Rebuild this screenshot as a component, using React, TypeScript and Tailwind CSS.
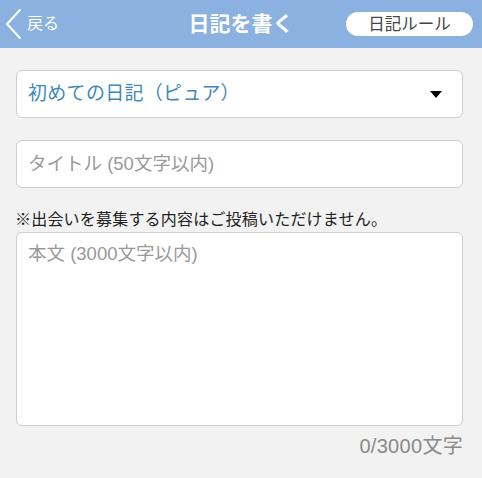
const font = { fontFamily: '"Liberation Sans", "Noto Sans CJK JP", sans-serif' };

export default function App() {
  return (
    <div className="w-[482px] h-[478px] bg-[#f2f2f2] overflow-hidden" style={font}>
      <header className="h-[48px] bg-[#8ab1e0] flex items-center relative">
        <button className="flex items-center text-white pl-[4px]">
          <svg width="20" height="32" viewBox="0 0 20 32" fill="none">
            <polyline points="16,2 3,16 16,30" stroke="white" strokeWidth="2" strokeLinecap="round" strokeLinejoin="round" />
          </svg>
          <span className="text-[16px] ml-[3px]">戻る</span>
        </button>
        <h1 className="absolute left-1/2 -translate-x-1/2 text-white text-[21px] font-bold">
          日記を書く
        </h1>
        <button className="ml-auto mr-[9px] w-[127px] h-[24px] rounded-full bg-white text-[#444] text-[16.5px] leading-none flex items-center justify-center">
          日記ルール
        </button>
      </header>

      <div className="pl-[16px] pt-[22px] pr-[19px]">
        <div className="h-[48px] bg-white border border-[#cfcfcf] rounded-[6px] flex items-center pl-[11px] pr-[20px]">
          <span className="text-[19px] text-[#3f89b8] tracking-[0.3px]">初めての日記（ピュア）</span>
          <span className="ml-auto w-0 h-0 border-l-[6px] border-r-[6px] border-t-[7px] border-l-transparent border-r-transparent border-t-black" />
        </div>

        <div className="mt-[22px] h-[48px] bg-white border border-[#cfcfcf] rounded-[6px] flex items-center pl-[11px]">
          <span className="text-[18.5px] text-[#999]">タイトル (50文字以内)</span>
        </div>

        <p className="mt-[20px] text-[16px] text-[#222] leading-[24px] -ml-[1px] tracking-[0.2px]">
          ※出会いを募集する内容はご投稿いただけません。
        </p>

        <div className="h-[194px] bg-white border border-[#cfcfcf] rounded-[6px] pl-[11px] pt-[7px]">
          <span className="text-[18.5px] text-[#999]">本文 (3000文字以内)</span>
        </div>

        <p className="mt-[7px] text-right text-[20px] tracking-[0.3px] text-[#8a8a8a] leading-[26px]">0/3000文字</p>
      </div>
    </div>
  );
}
